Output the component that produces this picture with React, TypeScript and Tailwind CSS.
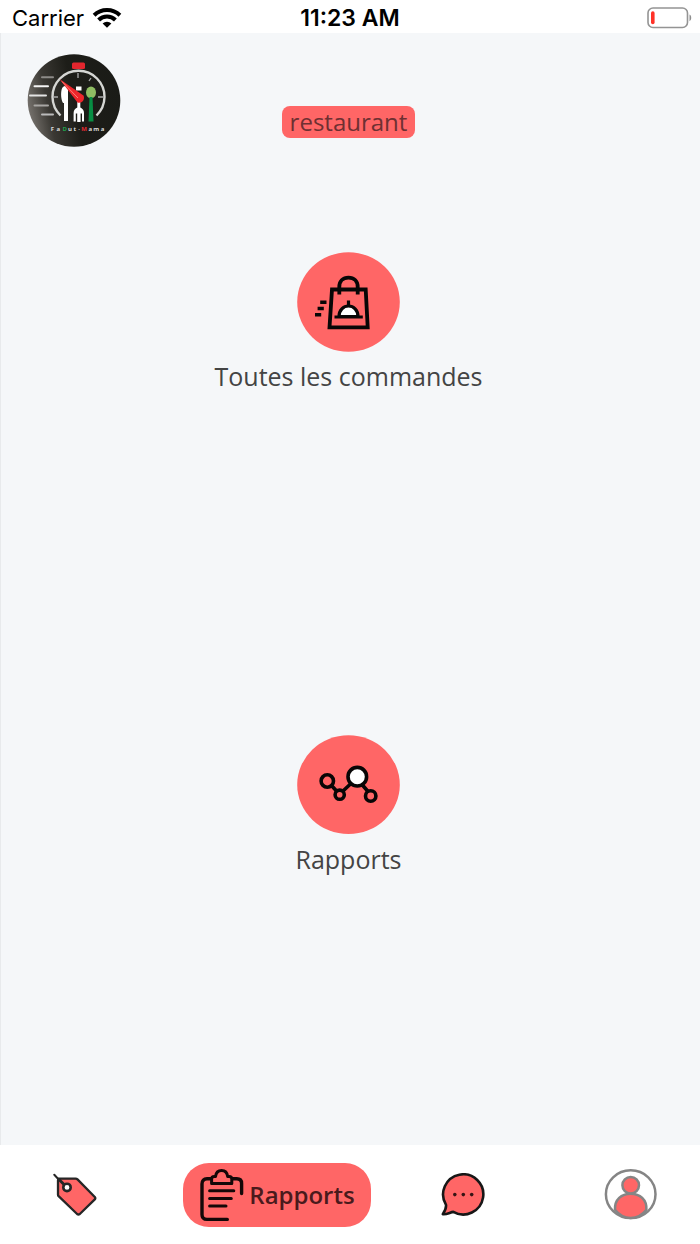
import React from "react";

function WifiIcon() {
  return (
    <svg width="30" height="22" viewBox="0 0 30 22" fill="none" stroke="#000" strokeWidth="4" aria-hidden="true">
      <path d="M2.1 8.2 A18.6 18.6 0 0 1 27.9 8.2" />
      <path d="M6.6 13 A12 12 0 0 1 23.4 13" />
      <path d="M15 20.8 L10.6 16.5 A6.4 6.4 0 0 1 19.4 16.5 Z" fill="#000" stroke="none" />
    </svg>
  );
}

function BatteryIcon() {
  return (
    <svg width="46" height="22" viewBox="0 0 46 22" fill="none" role="img" aria-label="Batterie faible">
      <rect x="2" y="1" width="39.5" height="19.5" rx="5" stroke="#949494" strokeWidth="1.6" />
      <rect x="5" y="4.3" width="3.6" height="13" rx="1.8" fill="#ff3228" />
      <path d="M43.5 7.6 C45.8 8.8 45.8 13 43.5 14.2 Z" fill="#8e8e8e" />
    </svg>
  );
}

const logoLetters = [
  { c: "F", x: 25.5, fill: "#ddd" },
  { c: "a", x: 31.3, fill: "#ddd" },
  { c: "D", x: 37.7, fill: "#1fa04b" },
  { c: "u", x: 43, fill: "#ddd" },
  { c: "t", x: 47.8, fill: "#ddd" },
  { c: "·", x: 52, fill: "#ddd" },
  { c: "M", x: 57, fill: "#e22b32" },
  { c: "a", x: 63.2, fill: "#ddd" },
  { c: "m", x: 69.3, fill: "#ddd" },
  { c: "a", x: 75.5, fill: "#ddd" },
];

function Logo() {
  return (
    <svg width="94" height="94" viewBox="0 0 94 94" fill="none" role="img" aria-label="FaDut Mama">
      <defs>
        <linearGradient id="disc" x1="0" y1="0.6" x2="1" y2="0.4">
          <stop offset="0" stopColor="#77736e" />
          <stop offset="0.22" stopColor="#3a3833" />
          <stop offset="0.5" stopColor="#1d1d18" />
          <stop offset="1" stopColor="#1a1b17" />
        </linearGradient>
      </defs>
      <circle cx="47" cy="46.5" r="46.3" fill="url(#disc)" />
      <g strokeWidth="2" strokeLinecap="round">
        <path d="M15 23.3H26" stroke="#8d8b88" />
        <path d="M7.5 32.3H21" stroke="#f4f4f4" />
        <path d="M3 41.5H19" stroke="#e4e4e4" />
        <path d="M7.5 51.5H21" stroke="#a8a6a3" />
        <path d="M15 60.5H26" stroke="#bbb" />
      </g>
      <path d="M33.5 61.5 A26 26 0 1 1 69.5 61.5" stroke="#d5d6d3" strokeWidth="2.4" />
      <path d="M51 19v5M64 24l-2 3M26 43h5M71 43h6" stroke="#aaa" strokeWidth="1.3" />
      <rect x="45" y="8.5" width="13" height="6.5" rx="1.5" fill="#e3262e" />
      <path d="M36 33 C33.5 35 33.5 45 36 49 H37 V67 H41 V35 C40 32 38 31 36 33 Z" fill="#fff" />
      <path d="M49 32.5h5.5v4H49ZM50.3 48h3v5.5Q57 55 57 59V67.5h-2v-8h-1.4v8.5h-3.4v-8.5h-1.4v8h-2.2V59Q46.6 55 50.3 53.5Z" fill="#fff" />
      <path d="M32.5 25 L56.5 41.5 C58.5 45.5 54.5 50 50.5 48.5 Z" fill="#ee252b" />
      <path d="M35 27.5 L51 44" stroke="#ff8176" strokeWidth="1" />
      <ellipse cx="64" cy="38.5" rx="5" ry="6" fill="#8fbd63" />
      <path d="M62.5 43h3l1 24.5h-5Z" fill="#078e43" />
      <g fontFamily="Open Sans, sans-serif" fontSize="6" fontWeight="700" textAnchor="middle">
        {logoLetters.map((l, i) => (
          <text key={i} x={l.x} y="77" fill={l.fill}>{l.c}</text>
        ))}
      </g>
    </svg>
  );
}

function OrdersIcon() {
  return (
    <svg width="103" height="100" viewBox="0 0 103 100" fill="none" stroke="#080606" strokeWidth="3.8" aria-hidden="true">
      <ellipse cx="51.5" cy="50" rx="51.3" ry="49.8" fill="#ff6666" stroke="none" />
      <path d="M35 37.5H68.7L70.7 75.3H32.5Z" />
      <path d="M42.3 42.5V35C42.3 29 46 25.7 51.5 25.7S60.7 29 60.7 35V42.5" />
      <path d="M42 64.5C42 58 46.5 54 51.5 54S61 58 61 64.5Z" fill="#fff" strokeWidth="3.2" />
      <path d="M37.5 65H65.8M51.5 48.5V54" strokeWidth="3.2" />
      <path d="M23.2 50.3H29.5M20.6 56.4H26.8M18 62.7H24.2" strokeWidth="3.5" />
    </svg>
  );
}

function ReportsIcon() {
  return (
    <svg width="103" height="100" viewBox="0 0 103 100" fill="none" stroke="#080606" strokeWidth="3.6" aria-hidden="true">
      <ellipse cx="51.5" cy="49.7" rx="51.3" ry="49.4" fill="#ff6666" stroke="none" />
      <path d="M34.5 50.5L39.5 56M46 56L54 48.5M65 49.5L71 56.5" />
      <circle cx="30.3" cy="46" r="6.2" />
      <circle cx="42.7" cy="59.7" r="4.6" />
      <circle cx="60.3" cy="41.7" r="9.3" fill="#fff" />
      <circle cx="73.7" cy="61" r="5.2" />
    </svg>
  );
}

function TagIcon() {
  return (
    <svg width="44" height="44" viewBox="0 0 44 44" fill="none" stroke="#262626" strokeWidth="2.3" strokeLinejoin="round" strokeLinecap="round" aria-hidden="true">
      <path d="M6.5 5.6L22.6 5.6Q23.7 5.6 24.5 6.4L41.8 24Q42.8 25.3 41.8 26.4L26.8 41Q25.4 42 24.1 41L5.6 23.2Q5 22.5 5 21.7V7Z" fill="#ff6666" />
      <circle cx="14" cy="14.4" r="3.7" fill="#fff" strokeWidth="2.6" />
      <path d="M1.3 1.8L5 5.7" strokeWidth="2" />
      <path d="M5.5 6L10.8 11.2" strokeWidth="3" />
    </svg>
  );
}

function ClipboardIcon() {
  return (
    <svg width="46" height="54" viewBox="0 0 46 54" fill="none" stroke="#140808" strokeWidth="3.4" strokeLinecap="round" strokeLinejoin="round" aria-hidden="true">
      <path d="M11.5 10.8H8Q3 10.8 3 16V46.5Q3 51.4 8 51.4H28.3" />
      <path d="M34 10.8H37.8Q42.6 10.8 42.6 15.5V25.5" />
      <path d="M12.6 15.4V11Q12.6 8.6 15.3 8.6H16.5C17 4.7 19.3 2.6 22.6 2.6S28.2 4.7 28.7 8.6H30Q32.8 8.6 32.8 11V15.4Z" strokeWidth="3" />
      <path d="M10.6 22.8H34.8M10.6 30.4H32.3M10.6 37.9H27" strokeWidth="3" />
    </svg>
  );
}

function ChatIcon() {
  return (
    <svg width="44" height="44" viewBox="0 0 44 44" aria-hidden="true">
      <path
        d="M1.8 41.2C4 38 5.4 35 5 31.8A20.1 20.1 0 1 1 12.3 38.9C9.5 39 6 41.8 1.8 41.2Z"
        fill="#ff6666" stroke="#171717" strokeWidth="2.6" strokeLinejoin="round"
      />
      <g fill="#361414">
        <circle cx="13.8" cy="21.6" r="1.8" />
        <circle cx="22.3" cy="21.6" r="1.8" />
        <circle cx="30.7" cy="21.6" r="1.8" />
      </g>
    </svg>
  );
}

function ProfileIcon() {
  return (
    <svg width="54" height="52" viewBox="0 0 54 52" stroke="#858585" strokeWidth="2.5" aria-hidden="true">
      <ellipse cx="26.7" cy="25.2" rx="24.8" ry="23.9" fill="#fff" />
      <path d="M11 40.8C10.4 30.5 17.5 24.7 26.7 24.7S43 30.5 42.4 40.8C38 46.3 33 49.1 26.7 49.1S15.4 46.3 11 40.8Z" fill="#ff6666" />
      <circle cx="26.7" cy="16.2" r="8.3" fill="#ff6666" />
    </svg>
  );
}

function Tile({ label, children }: { label: string; children: React.ReactNode }) {
  return (
    <div className="flex flex-1 justify-center pt-[73px]">
      <button type="button" className="flex cursor-pointer flex-col items-center gap-1.5 self-start">
        {children}
        <span className="text-[25px] leading-9 text-[#444]">{label}</span>
      </button>
    </div>
  );
}

export default function App() {
  return (
    <div className="flex min-h-screen flex-col bg-[#f5f7f9] font-['Open_Sans',sans-serif]">
      <header className="grid h-[33px] grid-cols-3 items-center bg-white pt-0.5 font-['Inter',sans-serif] text-[22px] leading-7 text-black">
        <div className="flex items-center gap-2 pl-3">
          <span>Carrier</span>
          <WifiIcon />
        </div>
        <time className="text-center text-[23px] font-semibold">11:23 AM</time>
        <div className="flex justify-end pr-2">
          <BatteryIcon />
        </div>
      </header>

      <main className="flex flex-1 flex-col border-l border-[#e8eaec] pr-1">
        <div className="grid h-[146px] grid-cols-3 items-start px-[26px] pt-[21px]">
          <Logo />
          <h1 className="mt-[52px] justify-self-center rounded-lg bg-[#ff6666] px-2 text-[24px] leading-8 text-[#6e3032]">
            restaurant
          </h1>
        </div>
        <Tile label="Toutes les commandes">
          <OrdersIcon />
        </Tile>
        <Tile label="Rapports">
          <ReportsIcon />
        </Tile>
      </main>

      <nav className="grid h-[99px] grid-cols-[150fr_254fr_118fr_178fr] items-center justify-items-center bg-white">
        <a href="#offres" aria-label="Offres">
          <TagIcon />
        </a>
        <a
          href="#rapports"
          aria-current="page"
          className="flex h-16 items-center gap-1 rounded-[26px] bg-[#ff6666] px-4 text-[24px] leading-8 font-semibold text-[#4a1a1c]"
        >
          <ClipboardIcon />
          <span>Rapports</span>
        </a>
        <a href="#messages" aria-label="Messages">
          <ChatIcon />
        </a>
        <a href="#profil" aria-label="Profil" className="justify-self-end pr-[42px]">
          <ProfileIcon />
        </a>
      </nav>
    </div>
  );
}
